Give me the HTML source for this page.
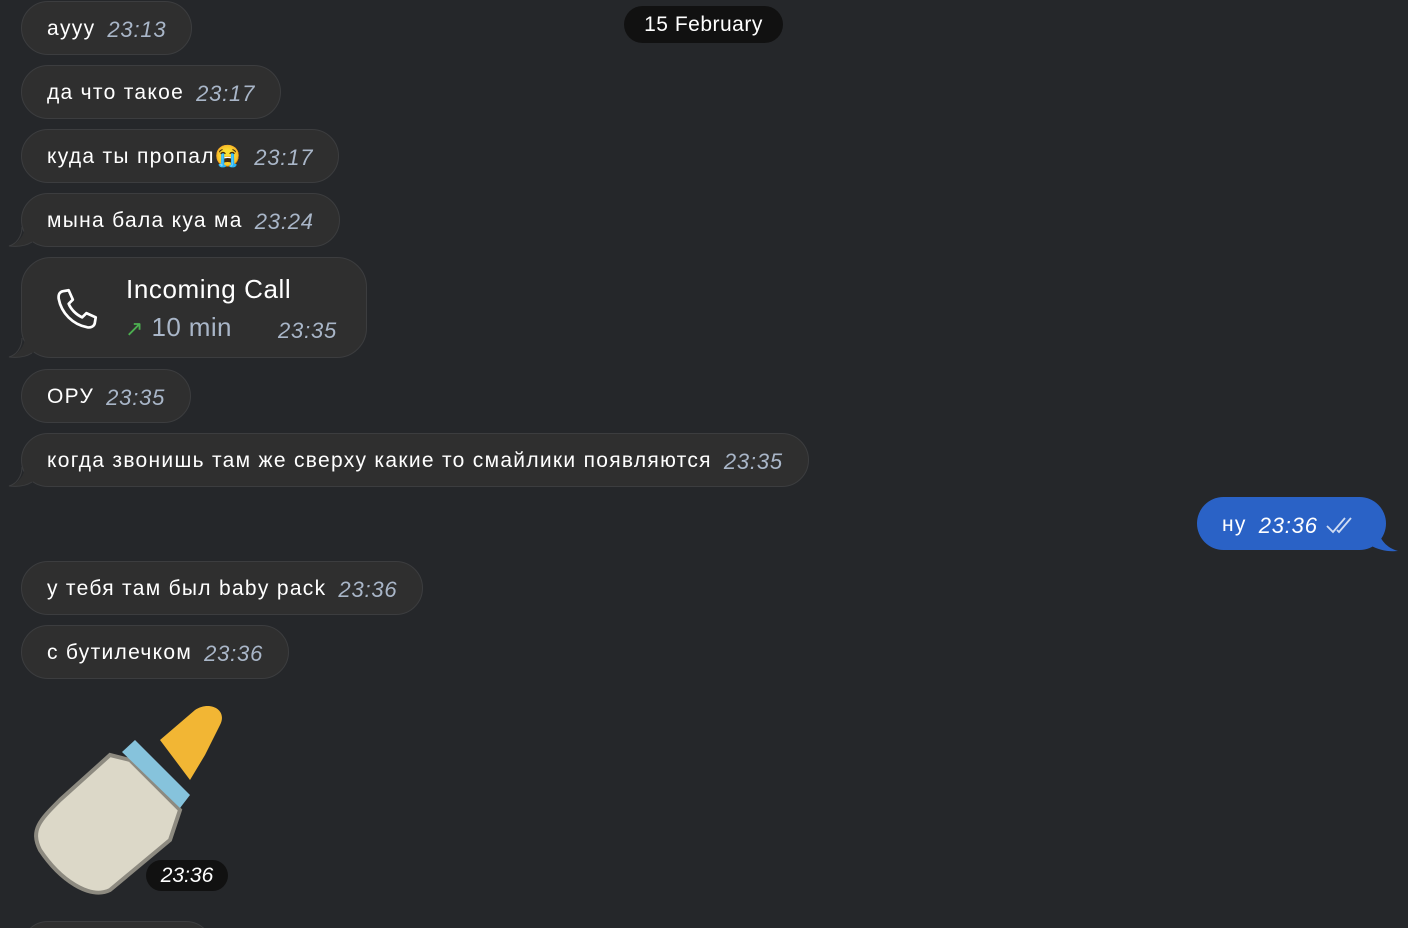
<html><head><style>
html,body{margin:0;width:1408px;height:928px;overflow:hidden}
body{background:#25272a;font-family:"Liberation Sans",sans-serif;position:relative}
.b{position:absolute;left:21px;height:52px;background:#2f2f2f;border:1px solid #3c3d3f;border-radius:27px;color:#fff;font-size:21px;line-height:52px;padding:0 25px;white-space:nowrap;letter-spacing:1.3px}
.t{font-style:italic;color:#a9b6c8;margin-left:12px;font-size:22px;position:relative;top:2px;letter-spacing:.8px}
.tail{position:absolute;left:8px;width:30px;height:20px;z-index:2}
.date{position:absolute;left:624px;top:6px;width:159px;height:37px;border-radius:19px;background:#111;color:#fff;font-size:21px;line-height:37px;text-align:center;letter-spacing:.5px}
</style></head><body>
<div class="date">15 February</div>
<div class="b" style="top:1px">ayyy<span class="t">23:13</span></div>
<div class="b" style="top:65px">да что такое<span class="t">23:17</span></div>
<div class="b" style="top:129px">куда ты пропал😭<span class="t">23:17</span></div>
<div class="b" style="top:193px">мына бала куа ма<span class="t">23:24</span></div>
<svg class="tail" style="top:227px" viewBox="0 0 30 20"><path d="M17 0 C16 10 9 17 1 19 C10 20 18 19 26 14 L26 0 Z" fill="#2f2f2f"/><path d="M14 0 C14 10 8 17 1 19 C10 20 18 19 24 15" fill="none" stroke="#3c3d3f"/></svg>
<div class="b" style="top:257px;height:99px;width:344px;padding:0;border-radius:30px">
<svg style="position:absolute;left:30px;top:26px" width="50" height="50" viewBox="0 0 24 24"><path d="M5 3.5 L8 3 L10 7.5 L8 9.5 C9 12 11.5 14.7 14.5 16 L16.5 14 L21 16 L20.5 19 C20 20.5 18.5 21 17 20.8 C10 19.5 4.5 14 3.2 7 C3 5 3.5 4 5 3.5 Z" fill="none" stroke="#fff" stroke-width="1.3" stroke-linejoin="round"/></svg>
<div style="position:absolute;left:104px;top:15px;line-height:32px;font-size:26px;letter-spacing:.6px">Incoming Call</div>
<div style="position:absolute;left:103px;top:53px;line-height:32px;font-size:26px;color:#a9b6c8;letter-spacing:.4px"><span style="color:#4caf50;font-size:22px">↗</span> 10 min</div>
<div class="t" style="position:absolute;left:256px;top:58px;line-height:30px;margin:0">23:35</div>
</div>
<svg class="tail" style="top:338px" viewBox="0 0 30 20"><path d="M17 0 C16 10 9 17 1 19 C10 20 18 19 26 14 L26 0 Z" fill="#2f2f2f"/><path d="M14 0 C14 10 8 17 1 19 C10 20 18 19 24 15" fill="none" stroke="#3c3d3f"/></svg>
<div class="b" style="top:369px">ОРУ<span class="t">23:35</span></div>
<div class="b" style="top:433px">когда звонишь там же сверху какие то смайлики появляются<span class="t">23:35</span></div>
<svg class="tail" style="top:467px" viewBox="0 0 30 20"><path d="M17 0 C16 10 9 17 1 19 C10 20 18 19 26 14 L26 0 Z" fill="#2f2f2f"/><path d="M14 0 C14 10 8 17 1 19 C10 20 18 19 24 15" fill="none" stroke="#3c3d3f"/></svg>
<div class="b" style="top:497px;left:1197px;background:#2a62c6;border:none;height:53px;line-height:53px;padding:0 28px 0 25px;width:136px">ну<span class="t" style="color:#fff">23:36</span>
<svg width="32" height="20" viewBox="0 0 32 20" style="vertical-align:middle"><path d="M2 11 L8 17 L20 3 M12 15 L14 17 L26 3" fill="none" stroke="#cfdcf3" stroke-width="1.8"/></svg></div>
<svg style="position:absolute;left:1370px;top:530px;z-index:2" width="30" height="22" viewBox="0 0 30 22"><path d="M0 0 L8 0 C10 10 17 18 28 21 C18 22 8 20 0 15 Z" fill="#2a62c6"/></svg>
<div class="b" style="top:561px">у тебя там был baby pack<span class="t">23:36</span></div>
<div class="b" style="top:625px">с бутилечком<span class="t">23:36</span></div>
<svg style="position:absolute;left:30px;top:700px" width="200" height="200" viewBox="0 0 200 200">
<path d="M100 60 L150 110 L140 140 L80 190 C60 200 30 180 10 150 C0 130 10 120 30 100 L80 55 Z" fill="#dcd8c8" stroke="#8d8a80" stroke-width="4"/>
<path d="M105 40 L160 95 L150 108 L92 52 Z" fill="#86c3dc"/>
<path d="M130 40 L165 10 C180 0 198 10 190 25 L175 55 L160 80 Z" fill="#f2b634"/>
</svg>
<div style="position:absolute;left:146px;top:860px;width:82px;height:31px;border-radius:16px;background:#111;color:#fff;font-style:italic;font-size:21px;line-height:31px;text-align:center">23:36</div>
<div class="b" style="top:921px;width:140px"></div>
</body></html>
